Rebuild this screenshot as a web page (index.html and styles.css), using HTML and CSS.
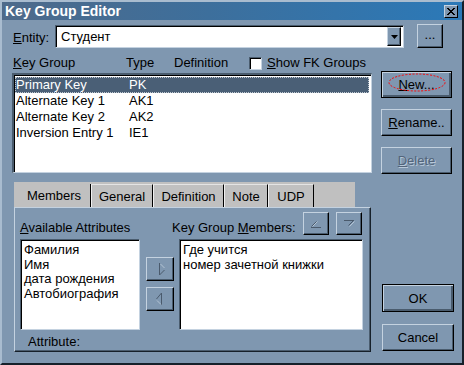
FILE: index.html
```html
<!DOCTYPE html>
<html lang="ru">
<head>
    <meta charset="UTF-8">
    <title>Key Group Editor</title>
    <link rel="stylesheet" href="styles.css">
</head>
<body>
    <div class="window">
        <div class="titlebar">
            <span class="title">Key Group Editor</span>
            <span class="close">
                <svg width="8" height="7" viewBox="0 0 8 7"><path d="M0 0l7 7M1 0l7 7M7 0l-7 7M8 0l-7 7" stroke="#000" stroke-width="1" fill="none"/></svg>
            </span>
        </div>
        <div class="content">
            <div class="entity-row">
                <span class="entity-label"><u>E</u>ntity:</span>
                <div class="combo">
                    <span class="combo-value">Студент</span>
                    <span class="combo-arrow"><svg width="7" height="4" viewBox="0 0 7 4"><path d="M0 0h7l-3.5 4z" fill="#000"/></svg></span>
                </div>
                <button class="btn btn-dots">...</button>
            </div>

            <div class="main">
                <div class="headers">
                    <span class="h-group"><u>K</u>ey Group</span>
                    <span class="h-type">Type</span>
                    <span class="h-def">Definition</span>
                    <span class="checkbox"></span>
                    <span class="h-fk"><u>S</u>how FK Groups</span>
                </div>
                <div class="listbox key-list">
                    <div class="key-row selected"><span class="k-name">Primary Key</span><span>PK</span></div>
                    <div class="key-row"><span class="k-name">Alternate Key 1</span><span>AK1</span></div>
                    <div class="key-row"><span class="k-name">Alternate Key 2</span><span>AK2</span></div>
                    <div class="key-row"><span class="k-name">Inversion Entry 1</span><span>IE1</span></div>
                </div>
                <div class="side-buttons">
                    <button class="btn btn-default btn-new">
                        <u>N</u>ew...
                        <svg class="mark" width="58" height="19" viewBox="0 0 58 19"><ellipse cx="29" cy="9.5" rx="28" ry="8.5" fill="none" stroke="#ff0000" stroke-width="1" stroke-dasharray="2 1.5"/></svg>
                    </button>
                    <button class="btn"><u>R</u>ename..</button>
                    <button class="btn disabled"><u>D</u>elete</button>
                </div>
            </div>

            <div class="lower">
                <div class="tabs">
                    <div class="tabstrip">
                        <span class="tab tab-members">Members</span>
                        <span class="tab tab-general">General</span>
                        <span class="tab tab-definition">Definition</span>
                        <span class="tab tab-note">Note</span>
                        <span class="tab tab-udp">UDP</span>
                    </div>
                    <div class="panel">
                        <div class="panel-grid">
                            <span class="lbl avail-label"><u>A</u>vailable Attributes</span>
                            <div class="members-head">
                                <span class="lbl"><span>Key Group </span><u>M</u>embers:</span>
                                <div class="mini-buttons">
                                    <button class="btn mini">
                                        <svg width="24" height="21" viewBox="0 0 24 21"><path d="M8.5 13.5l5-5" stroke="#b4c4d4"/><path d="M7.5 13.5l5-5M7 14.5h10" stroke="#4a5a6c"/></svg>
                                    </button>
                                    <button class="btn mini">
                                        <svg width="24" height="21" viewBox="0 0 24 21"><path d="M7 7.5h10M16.5 7.5l-5 5" stroke="#4a5a6c"/><path d="M17.5 8.5l-5 5" stroke="#b4c4d4"/></svg>
                                    </button>
                                </div>
                            </div>
                            <div class="listbox attr-list">
                                <div>Фамилия</div>
                                <div>Имя</div>
                                <div>дата рождения</div>
                                <div>Автобиография</div>
                            </div>
                            <div class="move-buttons">
                                <button class="btn move">
                                    <svg width="26" height="22" viewBox="0 0 26 22"><path d="M12.5 5v12M12.5 17l5-5" stroke="#4a5a6c"/><path d="M13.5 6l4 4" stroke="#b4c4d4"/></svg>
                                </button>
                                <button class="btn move">
                                    <svg width="26" height="22" viewBox="0 0 26 22"><path d="M14.5 5v12M14.5 5l-5 6" stroke="#4a5a6c"/><path d="M10 12.5l4 4" stroke="#b4c4d4"/></svg>
                                </button>
                            </div>
                            <div class="listbox attr-list members-list">
                                <div>Где учится</div>
                                <div>номер зачетной книжки</div>
                            </div>
                        </div>
                        <div class="attr-caption">Attribute:</div>
                    </div>
                </div>
                <div class="side-buttons bottom-buttons">
                    <button class="btn btn-default btn-ok">OK</button>
                    <button class="btn btn-cancel">Cancel</button>
                </div>
            </div>
        </div>
    </div>
</body>
</html>
```

FILE: styles.css
```css
body {
    margin: 0;
    font-family: "Liberation Sans", Arial, sans-serif;
    font-size: 13px;
    color: #000;
}
.window {
    width: 464px;
    height: 365px;
    box-sizing: border-box;
    background: #7f97b0;
    border: 2px solid;
    border-color: #a9bccf #16202a #16202a #a9bccf;
}
.titlebar {
    height: 18px;
    display: flex;
    align-items: center;
    justify-content: space-between;
    background: linear-gradient(to right, #4e6a8a, #3d6f9c 45%, #2b79b8);
    padding: 0 3px 0 3px;
}
.title {
    color: #fff;
    font-weight: bold;
    font-size: 14px;
}
.close {
    width: 12px;
    height: 11px;
    display: flex;
    align-items: center;
    justify-content: center;
    background: #7f97b0;
    border: 1px solid;
    border-color: #c4d2e0 #000 #000 #c4d2e0;
    margin-right: 1px;
}
.content {
    padding: 0 8px 0 10px;
}

/* buttons */
.btn {
    box-sizing: border-box;
    font-family: inherit;
    font-size: 13px;
    color: #000;
    background: #7f97b0;
    border: 1px solid;
    border-color: #c4d2e0 #000 #000 #c4d2e0;
    box-shadow: inset -1px -1px #4a5c6e;
    padding: 0;
    margin: 0;
    display: flex;
    align-items: center;
    justify-content: center;
}
.btn-default {
    border-color: #000;
    box-shadow: inset 1px 1px #c4d2e0, inset -2px -2px #4a5c6e;
}
.btn.disabled {
    color: #52647a;
    text-shadow: 1px 1px #b8c8d8;
}
u {
    text-decoration: underline;
    text-underline-offset: 1px;
}

/* sunken fields */
.listbox, .combo, .checkbox {
    box-sizing: border-box;
    background: #fff;
    border: 1px solid;
    border-color: #4a5c6e #c4d2e0 #c4d2e0 #4a5c6e;
    box-shadow: inset 1px 1px #000;
}

.entity-row {
    display: flex;
    align-items: flex-end;
    height: 24px;
    margin-top: 4px;
}
.entity-label {
    width: 42px;
    padding-left: 1px;
    align-self: center;
    margin-top: 2px;
}
.combo {
    width: 349px;
    height: 23px;
    display: flex;
    align-items: center;
    justify-content: space-between;
    padding: 0 2px 0 5px;
}
.combo-arrow {
    width: 12px;
    height: 17px;
    display: flex;
    align-items: center;
    justify-content: center;
    background: #7f97b0;
    border: 1px solid;
    border-color: #c4d2e0 #000 #000 #c4d2e0;
    box-shadow: inset -1px -1px #4a5c6e;
}
.btn-dots {
    width: 26px;
    height: 24px;
    margin-left: 13px;
    padding-bottom: 4px;
}

.main {
    display: grid;
    grid-template-columns: 360px 71px;
    grid-template-rows: 16px auto;
    column-gap: 9px;
    margin-top: 7px;
}
.headers {
    grid-column: 1 / 3;
    display: flex;
    align-items: center;
    line-height: 16px;
}
.h-group {
    width: 113px;
    padding-left: 1px;
}
.h-type {
    width: 48px;
}
.h-def {
    width: 75px;
}
.checkbox {
    width: 13px;
    height: 13px;
    margin-right: 5px;
}
.key-list {
    height: 100px;
    margin-top: 2px;
    padding: 2px 2px 0 1px;
    border-width: 2px 1px 1px 2px;
}
.key-row {
    display: flex;
    height: 16px;
    line-height: 16px;
    padding-left: 1px;
}
.key-row.selected {
    background: #4a5f76;
    color: #fff;
    outline: 1px dotted #c0c8d0;
    outline-offset: -1px;
}
.k-name {
    width: 113px;
}
.side-buttons {
    display: flex;
    flex-direction: column;
    gap: 11px;
}
.side-buttons .btn {
    height: 27px;
}
.btn-new {
    position: relative;
}
.mark {
    position: absolute;
    left: 6px;
    top: 1px;
}

.lower {
    display: flex;
    margin-top: 8px;
}
.tabs {
    width: 357px;
    margin-left: 2px;
}
.tabstrip {
    width: 341px;
    height: 25px;
    box-sizing: border-box;
    background: #c0c0c0;
    padding-top: 2px;
    display: flex;
}
.tab {
    box-sizing: border-box;
    height: 23px;
    display: flex;
    align-items: center;
    justify-content: center;
    border-right: 1px solid #000;
    border-left: 1px solid #f0f0f0;
    border-top: 1px solid #e4e4e4;
}
.tab-members { width: 77px; border-left: none; border-top: none; padding-left: 4px; }
.tab-general { width: 62px; }
.tab-definition { width: 71px; }
.tab-note { width: 44px; }
.tab-udp { width: 46px; }

.panel {
    box-sizing: border-box;
    height: 145px;
    border: 1px solid;
    border-color: #c4d2e0 #16202a #16202a #c4d2e0;
    box-shadow: inset -1px -1px #4a5c6e;
    padding: 4px 6px 0 5px;
}
.panel-grid {
    display: grid;
    grid-template-columns: 126px 33px 184px;
    grid-template-rows: 24px 91px;
    row-gap: 3px;
}
.lbl {
    align-self: end;
    line-height: 16px;
}
.members-head {
    grid-column: 2 / 4;
    display: flex;
    justify-content: space-between;
    padding-left: 26px;
}
.mini-buttons {
    display: flex;
    gap: 7px;
    padding-right: 1px;
}
.mini {
    width: 26px;
    height: 23px;
}
.attr-list {
    width: 120px;
    height: 91px;
    padding: 3px 2px 0 3px;
    line-height: 14.5px;
}
.members-list {
    width: 184px;
}
.move-buttons {
    display: flex;
    flex-direction: column;
    gap: 6px;
    margin-top: 18px;
}
.move {
    width: 28px;
    height: 24px;
}
.attr-caption {
    padding-left: 8px;
    margin-top: 4px;
    line-height: 16px;
}

.bottom-buttons {
    width: 72px;
    margin-left: 11px;
    align-self: flex-end;
    gap: 12px;
    margin-bottom: 1px;
}
.bottom-buttons .btn-ok {
    height: 28px;
}
```
